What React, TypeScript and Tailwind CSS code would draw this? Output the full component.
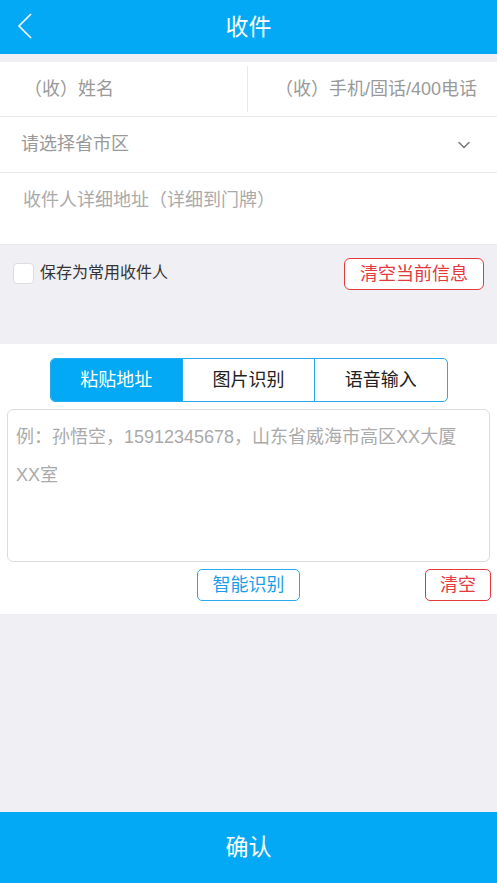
import { ChevronDown } from 'lucide-react';

const font = 'font-["Helvetica_Neue","Liberation_Sans","Noto_Sans_CJK_SC",sans-serif]';

const tabs = ['粘贴地址', '图片识别', '语音输入'];

export default function App() {
  return (
    <div className={`${font} flex h-[883px] w-[497px] flex-col bg-[#efeff4]`}>
      {/* Header */}
      <div className="relative flex h-[54px] shrink-0 items-center justify-center bg-[#03a9f4]">
        <svg className="absolute left-[12px] top-[8px]" width="26" height="38" viewBox="0 0 26 38" fill="none">
          <path d="M19 6 L7 18 L19 30" stroke="white" strokeWidth="1.6" />
        </svg>
        <span className="text-[23px] text-white">收件</span>
      </div>

      {/* Form */}
      <div className="mt-[8px] flex flex-col bg-white">
        <div className="flex h-[55px] items-center border-b border-[#e8e8ea]">
          <div className="flex h-[46px] w-[248px] items-center border-r border-[#e8e8ea] pl-[24px] text-[18px] text-[#999]">
            （收）姓名
          </div>
          <div className="flex flex-1 justify-end pr-[20px] text-[18px] text-[#999]">（收）手机/固话/400电话</div>
        </div>
        <div className="flex h-[56px] items-center justify-between border-b border-[#e8e8ea] pl-[21px] pr-[23px] text-[18px] text-[#999]">
          <span>请选择省市区</span>
          <ChevronDown className="h-[20px] w-[20px] text-[#777]" strokeWidth={1.8} />
        </div>
        <div className="h-[71px] pl-[23px] pt-[14px] text-[18px] text-[#aaa]">收件人详细地址（详细到门牌）</div>
      </div>

      {/* Save / clear */}
      <div className="flex h-[100px] shrink-0 items-start justify-between border-t border-[#e8e8ea] px-[13px] pt-[13px]">
        <label className="mt-[3px] flex items-center gap-[6px] text-[16px] text-[#333]">
          <span className="h-[21px] w-[21px] rounded-[4px] border border-[#ddd] bg-white" />
          保存为常用收件人
        </label>
        <button className="h-[32px] w-[140px] rounded-[6px] border border-[#e5393d] bg-white text-[18px] text-[#e5393d]">
          清空当前信息
        </button>
      </div>

      {/* Paste section */}
      <div className="flex flex-col bg-white pb-[13px] pt-[14px]">
        <div className="mx-auto flex h-[44px] w-[398px] overflow-hidden rounded-[5px] border border-[#27aaf0]">
          {tabs.map((t, i) => (
            <div
              key={t}
              className={
                i === 0
                  ? 'flex flex-1 items-center justify-center bg-[#03a9f4] text-[18px] text-white'
                  : 'flex flex-1 items-center justify-center border-l border-[#27aaf0] text-[18px] text-[#222]'
              }
            >
              {t}
            </div>
          ))}
        </div>
        <div className="mx-[7px] mt-[7px] h-[153px] rounded-[6px] border border-[#dcdcdc] pl-[8px] pr-[18px] pt-[8px] text-[18px] leading-[38px] text-[#aaa]">
          例：孙悟空，15912345678，山东省威海市高区XX大厦XX室
        </div>
        <div className="mt-[7px] grid grid-cols-[1fr_auto_1fr] items-center px-[6px]">
          <span />
          <button className="h-[32px] w-[103px] rounded-[5px] border border-[#27aaf0] text-[18px] text-[#1a9ee8]">
            智能识别
          </button>
          <div className="flex justify-end">
            <button className="h-[32px] w-[66px] rounded-[5px] border border-[#e5393d] text-[18px] text-[#e5393d]">
              清空
            </button>
          </div>
        </div>
      </div>

      <div className="flex-1" />

      {/* Confirm */}
      <button className="flex h-[71px] shrink-0 items-center justify-center bg-[#03a9f4] text-[23px] text-white">
        确认
      </button>
    </div>
  );
}
